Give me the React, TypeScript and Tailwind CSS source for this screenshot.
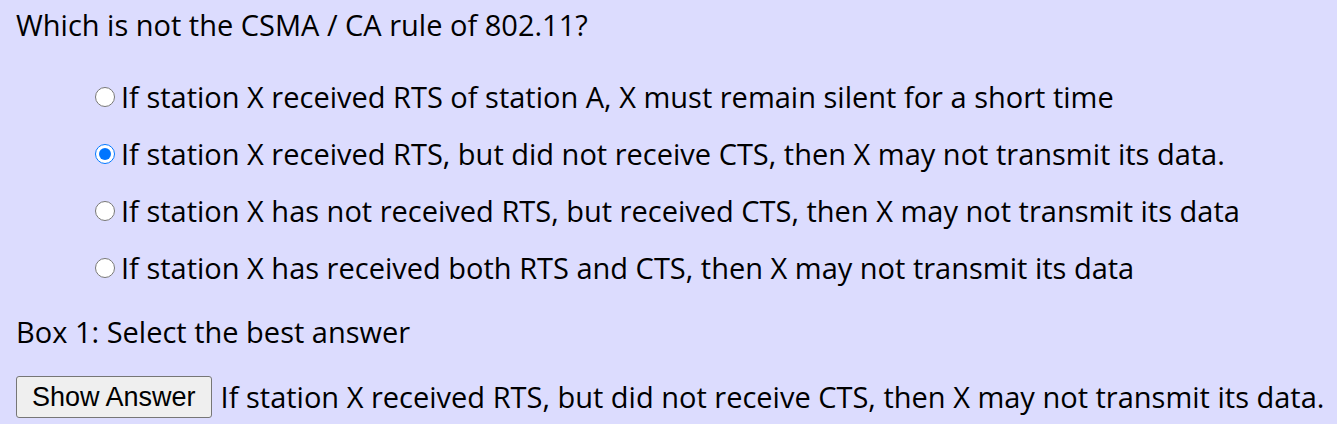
import React, { useState } from 'react';

const options = [
  'If station X received RTS of station A, X must remain silent for a short time',
  'If station X received RTS, but did not receive CTS, then X may not transmit its data.',
  'If station X has not received RTS, but received CTS, then X may not transmit its data',
  'If station X has received both RTS and CTS, then X may not transmit its data',
];

const App: React.FC = () => {
  const [selected, setSelected] = useState(1);

  return (
    <div className="min-h-screen bg-[#dcdcfe] text-black font-['Open_Sans',sans-serif] text-[29px] px-4 pt-[4px] whitespace-nowrap">
      <div className="leading-[42px]">Which is not the CSMA / CA rule of 802.11?</div>
      <div className="pl-[79px] pt-[30px] flex flex-col gap-[15px]">
        {options.map((opt, idx) => (
          <label key={idx} className="flex items-center leading-[42px]">
            <input
              type="radio"
              name="q1"
              checked={selected === idx}
              onChange={() => setSelected(idx)}
              className="w-[20px] h-[20px] m-0 mr-[6px] accent-[#0075ff]"
            />
            {opt}
          </label>
        ))}
      </div>
      <div className="leading-[42px] pt-[22px]">Box 1: Select the best answer</div>
      <div className="flex items-center pt-[23px] gap-[9px]">
        <button className="shrink-0 h-[42px] px-[15px] bg-[#efefef] border border-[#767676] rounded-[3px] font-['Liberation_Sans',sans-serif] text-[27px] whitespace-nowrap">
          Show Answer
        </button>
        <span className="leading-[42px]">{options[1]}</span>
      </div>
    </div>
  );
};

export default App;
